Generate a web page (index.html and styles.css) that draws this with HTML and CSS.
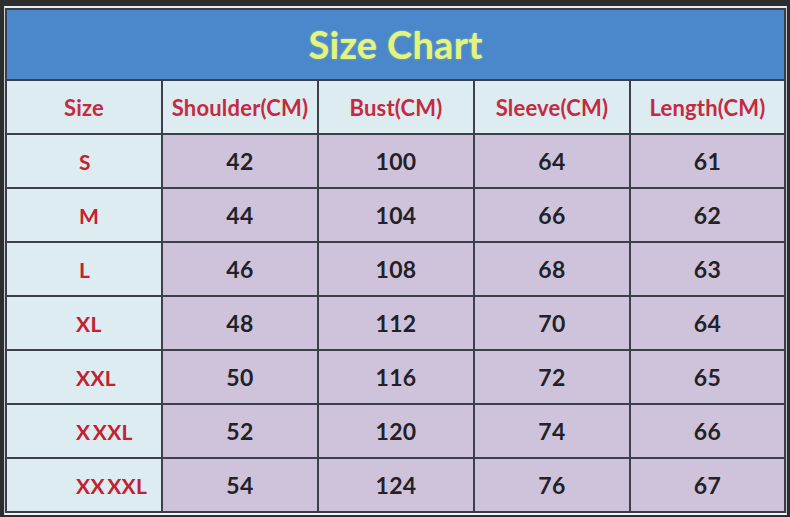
FILE: index.html
```html
<!DOCTYPE html>
<html>
<head>
<meta charset="utf-8">
<link rel="stylesheet" href="styles.css">
</head>
<body>
<div class="frame">
  <div class="chart">
    <div class="title">Size Chart</div>
    <div class="head">Size</div>
    <div class="head">Shoulder(CM)</div>
    <div class="head">Bust(CM)</div>
    <div class="head">Sleeve(CM)</div>
    <div class="head">Length(CM)</div>

    <div class="size short">S</div><div class="num">42</div><div class="num">100</div><div class="num">64</div><div class="num">61</div>
    <div class="size short">M</div><div class="num">44</div><div class="num">104</div><div class="num">66</div><div class="num">62</div>
    <div class="size short">L</div><div class="num">46</div><div class="num">108</div><div class="num">68</div><div class="num">63</div>
    <div class="size">XL</div><div class="num">48</div><div class="num">112</div><div class="num">70</div><div class="num">64</div>
    <div class="size">XXL</div><div class="num">50</div><div class="num">116</div><div class="num">72</div><div class="num">65</div>
    <div class="size">X XXL</div><div class="num">52</div><div class="num">120</div><div class="num">74</div><div class="num">66</div>
    <div class="size">XX XXL</div><div class="num">54</div><div class="num">124</div><div class="num">76</div><div class="num">67</div>
  </div>
</div>
</body>
</html>
```

FILE: styles.css
```css
html, body {
  margin: 0;
  padding: 0;
  background: #2d2d2f;
  height: 517px;
  overflow: hidden;
}

.frame {
  margin: 6px 3px 0 4px;
  border-top: 2px solid #e9eef0;
  border-left: 1px solid #c9cfd2;
  border-right: 1px solid #bfc3c6;
  border-bottom: 2px solid #f2f4f5;
}

.chart {
  display: grid;
  grid-template-columns: 154px 154px 154px 154px 1fr;
  grid-template-rows: 69px repeat(8, 52px);
  gap: 2px;
  background: #3d3f4a;
  border: 2px solid #3b3d48;
  font-family: Lato, "Open Sans", sans-serif;
  font-weight: 700;
}

.chart > div {
  display: flex;
  align-items: center;
  justify-content: center;
}

.title {
  grid-column: 1 / -1;
  background: #4b88cb;
  color: #e4f57b;
  font-size: 38px;
  letter-spacing: 0.3px;
  text-shadow: 0 0 2px rgba(240, 255, 150, 0.5);
  padding-bottom: 2px;
}

.head {
  background: #dcecf1;
  color: #c52a3e;
  font-size: 22px;
  letter-spacing: 0.2px;
}

.chart > .size {
  justify-content: flex-start;
  padding-left: 69px;
  background: #dcecf1;
  color: #c4202f;
  font-size: 21px;
  white-space: pre;
  word-spacing: -3px;
  letter-spacing: 0.3px;
}

.chart > .size.short {
  padding-left: 72px;
}

.num {
  background: #cfc3dc;
  color: #222127;
  font-size: 23px;
  letter-spacing: 0.3px;
}
```
